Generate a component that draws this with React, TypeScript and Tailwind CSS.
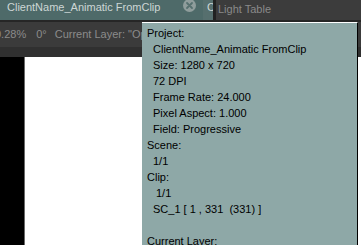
import React from "react";

const lines: { text: string; indent: string }[] = [
  { text: "Project:", indent: "" },
  { text: "ClientName_Animatic FromClip", indent: "ml-[6px]" },
  { text: "Size: 1280 x 720", indent: "ml-[6px]" },
  { text: "72 DPI", indent: "ml-[6px]" },
  { text: "Frame Rate: 24.000", indent: "ml-[6px]" },
  { text: "Pixel Aspect: 1.000", indent: "ml-[6px]" },
  { text: "Field: Progressive", indent: "ml-[6px]" },
  { text: "Scene:", indent: "" },
  { text: "1/1", indent: "ml-[6px]" },
  { text: "Clip:", indent: "" },
  { text: "1/1", indent: "ml-[9px]" },
  { text: "SC_1 [ 1 , 331  (331) ]", indent: "ml-[6px]" },
  { text: "\u00a0", indent: "" },
  { text: "Current Layer:", indent: "" },
];

function CloseIcon() {
  return (
    <svg width="13" height="13" viewBox="0 0 13 13">
      <circle cx="6.5" cy="6.5" r="6.5" fill="#8f9d9c" />
      <path d="M4 4 L9 9 M9 4 L4 9" stroke="#56706f" strokeWidth="1.8" strokeLinecap="round" />
    </svg>
  );
}

export default function App() {
  return (
    <div
      className="relative w-[361px] h-[245px] overflow-hidden bg-[#303030] flex flex-col"
      style={{ fontFamily: '"Liberation Sans", Arial, sans-serif' }}
    >
      {/* tab row */}
      <div className="flex h-[20px] shrink-0 bg-[#3c3c3c] text-[11px]">
        <div className="w-[203px] bg-[#4e6a69] pl-[7px] relative leading-[14px] text-[#cdd6d5] whitespace-nowrap">
          ClientName_Animatic FromClip
          <div className="absolute left-[183px] top-[-1px]">
            <CloseIcon />
          </div>
        </div>
        <div className="w-[10px] bg-[#566f6e] overflow-hidden pl-[4px] leading-[14px] text-[#cdd6d5]">C</div>
        <div className="w-[3px] bg-[#222]" />
        <div className="flex-1 pl-[2px] leading-[18px] text-[#8a8a8a] whitespace-nowrap">Light Table</div>
      </div>
      <div className="h-[2px] shrink-0 bg-[#262626]" />
      {/* toolbar */}
      <div className="h-[25px] shrink-0 bg-[#3b3b3b] flex items-center text-[11px] text-[#8b8b8b] whitespace-nowrap">
        <span className="ml-[-5px]">0.28%</span>
        <span className="ml-[10px]">0°</span>
        <span className="ml-[8px]">Current Layer: "Op</span>
      </div>
      <div className="h-[10px] shrink-0 bg-[#303030]" />
      {/* canvas */}
      <div className="flex flex-1">
        <div className="w-[24px] bg-black" />
        <div className="w-px bg-[#6a6a6a]" />
        <div className="flex-1 bg-white" />
      </div>

      {/* tooltip */}
      <div className="absolute left-[142px] top-[22px] w-[216px] h-[240px] bg-[#8ea8a7] border-t border-t-white border-r border-r-black pl-[5px] pt-[2px] text-[11px] leading-[16px] text-black">
        {lines.map((l, i) => (
          <div key={i} className={`whitespace-pre ${l.indent}`}>
            {l.text}
          </div>
        ))}
      </div>
    </div>
  );
}
